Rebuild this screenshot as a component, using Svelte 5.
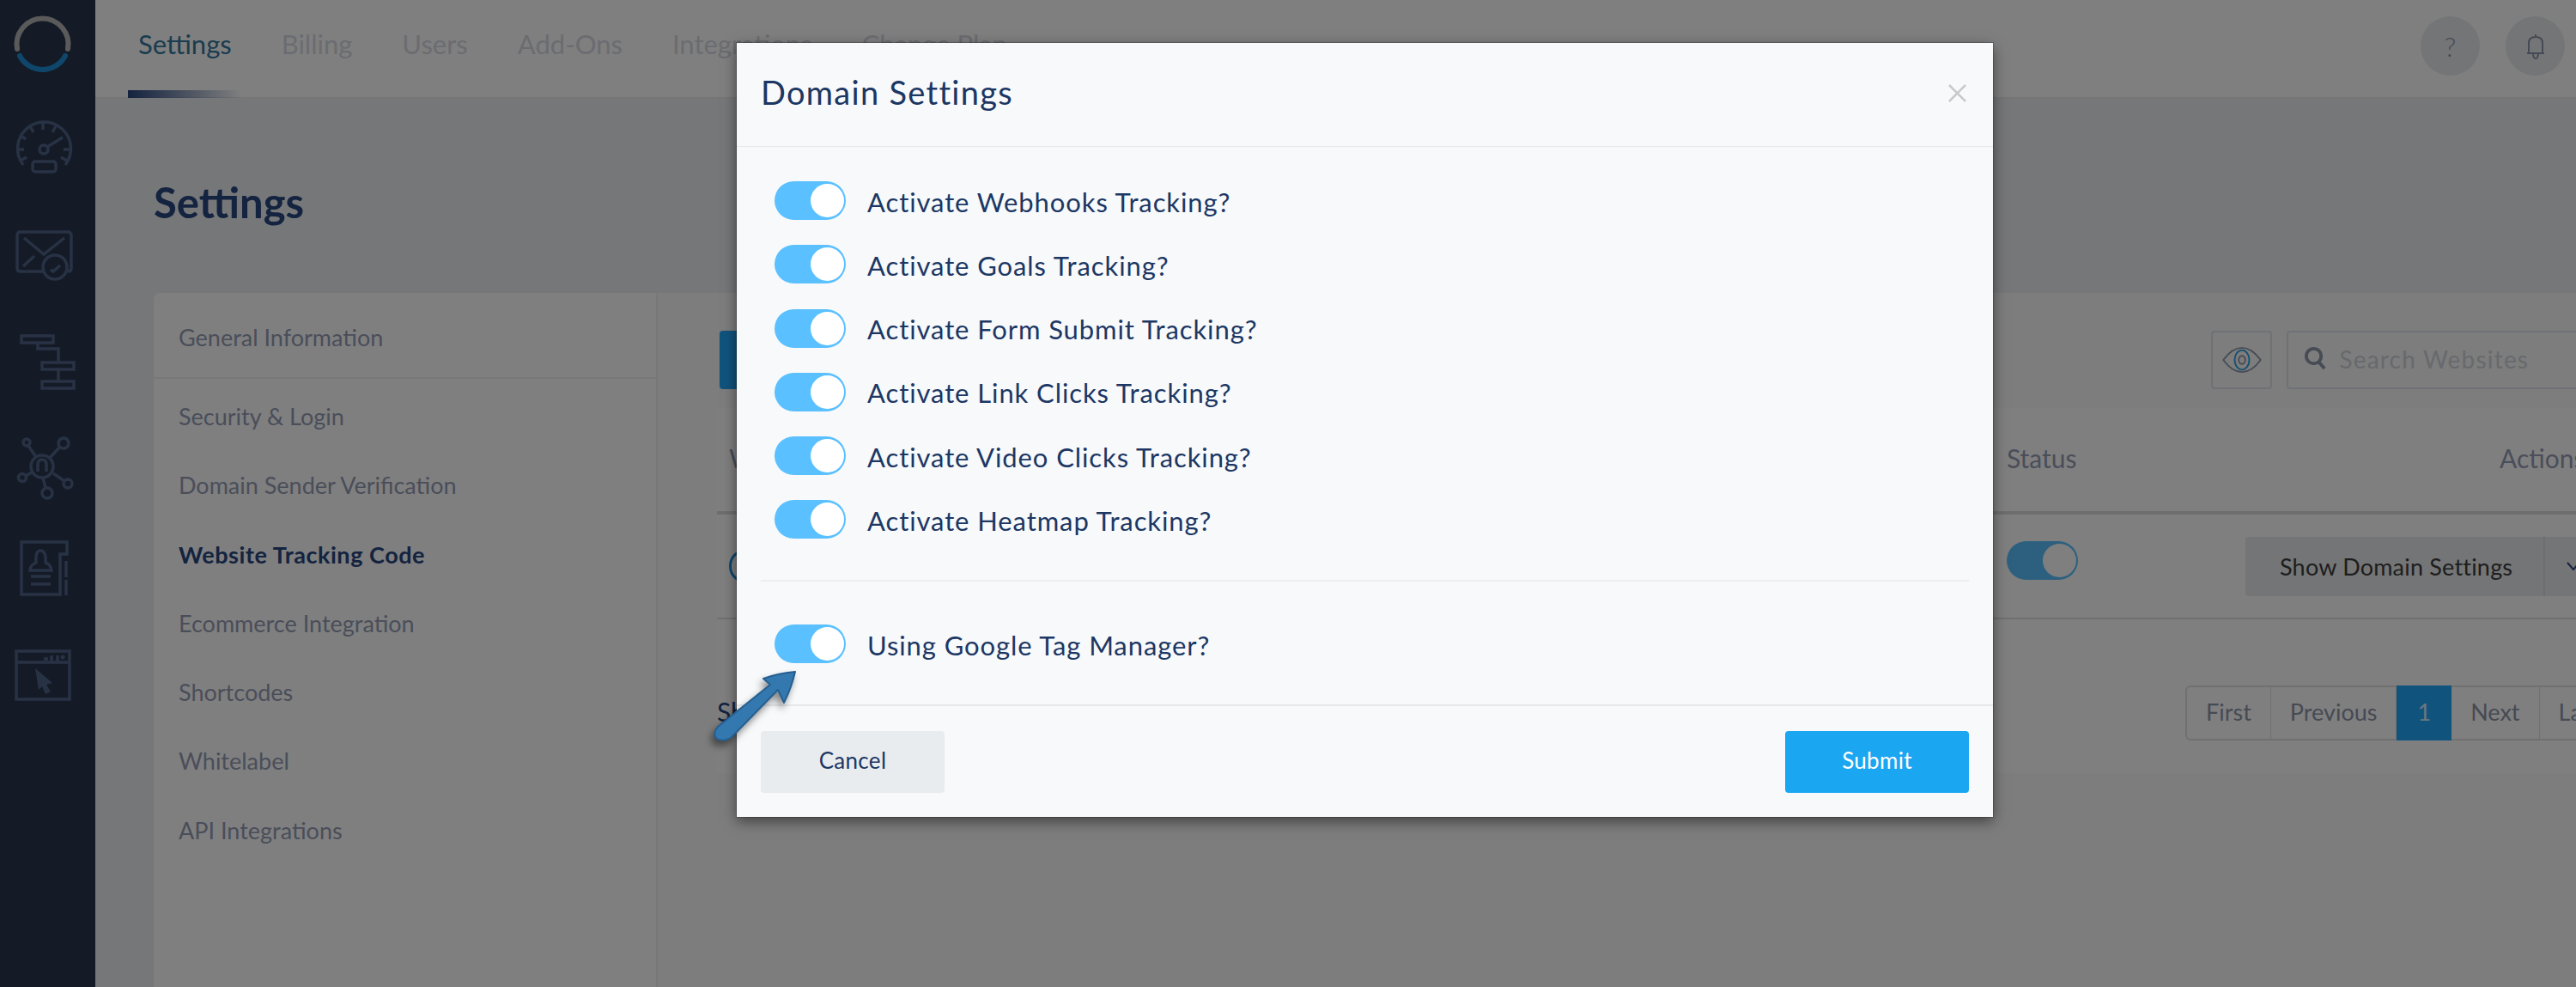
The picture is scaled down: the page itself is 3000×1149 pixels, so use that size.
<script>
	const tabs = ["Settings", "Billing", "Users", "Add-Ons", "Integrations", "Change Plan"];
	const menu = [
		"Security & Login",
		"Domain Sender Verification",
		"Website Tracking Code",
		"Ecommerce Integration",
		"Shortcodes",
		"Whitelabel",
		"API Integrations"
	];
	const tracking = ["Webhooks", "Goals", "Form Submit", "Link Clicks", "Video Clicks", "Heatmap"];
	const pages = ["First", "Previous", "1", "Next", "Last"];
</script>

<div class="page">
	<aside class="sidebar">
		<svg class="logo" viewBox="0 0 111 102" width="111" height="102" fill="none" stroke-linecap="round" stroke-width="6">
			<path d="M20 57 A30 30 0 1 1 79 57" stroke="#b4b4b4" />
			<path d="M23 65 A30 30 0 0 0 76 65" stroke="#1e8fd8" />
		</svg>
		<svg viewBox="0 109 111 123" width="111" height="123" fill="none" stroke="#50648a" stroke-width="3.5">
			<path d="M27 192 A31 31 0 1 1 76 192" />
			<path d="M50 143 V151 M35 147 L39 154 M65 147 L61 154 M24 158 L30 162 M21 174 H28 M74 174 H81 M24 187 L31 183 M78 187 L71 183" />
			<circle cx="51" cy="174" r="5" />
			<path d="M55 171 L73 160" />
			<rect x="38" y="188" width="27" height="12" rx="3" />
		</svg>
		<svg viewBox="0 232 111 123" width="111" height="123" fill="none" stroke="#50648a" stroke-width="3.5">
			<path d="M51 316 H24 Q20 316 20 312 V274 Q20 270 24 270 H79 Q83 270 83 274 V312 Q83 316 79 316" />
			<path d="M28 277 L51 296 L75 277 M27 310 L40 298" />
			<circle cx="64" cy="311" r="14" fill="#28364c" />
			<path d="M59 314 L62 316 L70 309" />
		</svg>
		<svg viewBox="0 355 111 123" width="111" height="123" fill="none" stroke="#50648a" stroke-width="3.5">
			<rect x="25" y="391" width="37" height="8" />
			<path d="M44 399 V406 H68 V422 M68 430 V444" />
			<rect x="49" y="422" width="37" height="8" />
			<rect x="49" y="444" width="37" height="8" />
		</svg>
		<svg viewBox="0 478 111 123" width="111" height="123" fill="none" stroke="#50648a" stroke-width="3.5">
			<circle cx="49" cy="543" r="13" />
			<path d="M44 549 V541 Q44 535 49 535 Q54 535 54 541 V549" />
			<circle cx="31" cy="515" r="4" />
			<circle cx="74" cy="516" r="6" />
			<circle cx="26" cy="556" r="4.5" />
			<circle cx="79" cy="563" r="5" />
			<circle cx="55" cy="574" r="6" />
			<path d="M33 519 L42 532 M70 520 L58 533 M30 554 L37 550 M62 551 L75 560 M50 556 L53 568" />
		</svg>
		<svg viewBox="0 601 111 123" width="111" height="123" fill="none" stroke="#50648a" stroke-width="3.5">
			<path d="M25 631 H78 V645 H70 V692 H25 Z" />
			<path d="M77 653 V672 M77 675 V693" />
			<path d="M42 655 Q41 641 47 641 Q54 641 53 655 Q59 657 60 664 H35 Q35 658 42 655 Z" />
			<path d="M36 671 H59 M36 680 H59" />
		</svg>
		<svg viewBox="0 724 111 123" width="111" height="123" fill="none" stroke="#50648a" stroke-width="3.5">
			<rect x="19" y="758" width="62" height="56" />
			<path d="M19 771 H81" />
			<path d="M51 767 H56 M60 763 V770 M67 763 V770" />
			<circle cx="73" cy="765" r="2.5" fill="#50648a" stroke="none" />
			<path d="M41 778 L61 795 L54 797 L59 805 L53 808 L49 799 L45 803 Z" fill="#50648a" stroke="none" />
		</svg>
	</aside>

	<main class="main">
		<header class="topbar">
			<nav class="tabs">
				{#each tabs as tab, i}
					<span class="tab" class:active={i === 0}>{tab}</span>
				{/each}
			</nav>
			<div class="round-buttons">
				<span class="round help">?</span>
				<span class="round">
					<svg viewBox="0 0 24 30" width="24" height="30" fill="none" stroke="#8d95a8" stroke-width="2">
						<path d="M2 23 H22 M4 23 V11 Q4 4 12 4 Q20 4 20 11 V23 M9 23 Q9 29 12 29 Q15 29 15 23 M12 1 V4" />
					</svg>
				</span>
			</div>
		</header>

		<section class="content">
			<h1>Settings</h1>
			<div class="card">
				<div class="menu">
					<div class="menu-head">General Information</div>
					{#each menu as item}
						<div class="menu-item" class:current={item === "Website Tracking Code"}>{item}</div>
					{/each}
				</div>
				<div class="panel">
					<div class="toolbar">
						<span class="add-button"></span>
						<span class="eye-box">
							<svg viewBox="0 0 50 36" width="48" height="34" fill="none">
								<path d="M2 18 Q13 3 25 3 Q37 3 48 18 Q37 33 25 33 Q13 33 2 18 Z" stroke="#8f97ab" stroke-width="2" />
								<ellipse cx="25" cy="18" rx="9" ry="12" stroke="#2a9fe0" stroke-width="2" />
								<ellipse cx="25" cy="18" rx="4" ry="5" stroke="#8f97ab" stroke-width="2" />
							</svg>
						</span>
						<span class="search">
							<svg viewBox="0 0 28 30" width="27" height="29" fill="none" stroke="#8f97ab">
								<circle cx="12" cy="12" r="9" stroke-width="4" />
								<path d="M18 19 L25 27" stroke-width="4" />
							</svg>
							<span class="placeholder">Search Websites</span>
						</span>
					</div>
					<div class="table">
						<div class="table-head">
							<span class="col-name">Website</span>
							<span class="col-status">Status</span>
							<span class="col-action action-title">Actions</span>
						</div>
						<div class="table-row">
							<span class="col-name"><span class="ring"></span></span>
							<span class="col-status"><span class="toggle"><span class="knob"></span></span></span>
							<span class="col-action split">
								<span class="show-settings">Show Domain Settings</span>
								<svg class="caret" viewBox="0 0 16 10" width="16" height="10" fill="none" stroke="#28467e" stroke-width="2">
									<path d="M1 1 L8 9 L15 1" />
								</svg>
							</span>
						</div>
						<div class="table-foot">
							<span class="showing">Showing 1 to 1 of 1 entries</span>
							<div class="pager">
								{#each pages as page}
									<span class="page-link" class:on={page === "1"}>{page}</span>
								{/each}
							</div>
						</div>
					</div>
				</div>
			</div>
		</section>
	</main>

	<div class="backdrop"></div>

	<div class="modal">
		<div class="modal-head">
			<h2>Domain Settings</h2>
			<svg viewBox="0 0 21 21" width="21" height="21" stroke="#c9c9c9" stroke-width="2.5">
				<path d="M1 1 L20 20 M20 1 L1 20" />
			</svg>
		</div>
		<div class="modal-body">
			{#each tracking as name}
				<div class="option">
					<span class="toggle"><span class="knob"></span></span>
					<span class="label">Activate {name} Tracking?</span>
				</div>
			{/each}
			<hr />
			<div class="option">
				<span class="toggle"><span class="knob"></span></span>
				<span class="label">Using Google Tag Manager?</span>
			</div>
		</div>
		<div class="modal-foot">
			<button class="cancel">Cancel</button>
			<button class="submit">Submit</button>
		</div>
	</div>

	<svg class="arrow" viewBox="825 775 110 100" width="110" height="100">
		<path d="M926 782 Q905 784 889 790 L897 797 L836 846 Q829 855 835 860 Q842 864 851 859 L906 803 L913 818 Q922 800 926 782 Z" fill="#3478b0" stroke="#255f91" stroke-width="2" stroke-linejoin="round" />
	</svg>
</div>

<style>
	:global(body) {
		margin: 0;
	}

	.page {
		position: relative;
		display: flex;
		width: 3000px;
		height: 1149px;
		overflow: hidden;
		background: #eceef0;
		font-family: Lato, "Open Sans", sans-serif;
		color: #28467e;
	}

	.sidebar {
		flex: 0 0 111px;
		display: flex;
		flex-direction: column;
		background: #28364c;
	}

	.logo {
		margin-bottom: 7px;
	}

	.main {
		flex: 1;
		min-width: 0;
	}

	.topbar {
		display: flex;
		justify-content: space-between;
		align-items: flex-start;
		height: 114px;
		box-sizing: border-box;
		padding: 19px 13px 0 38px;
		background: #fff;
		border-bottom: 1px solid #eaeaea;
	}

	.tabs {
		display: flex;
	}

	.tab {
		position: relative;
		height: 95px;
		padding: 0 29px;
		box-sizing: border-box;
		font-size: 31px;
		line-height: 64px;
		color: #d6d8e2;
		white-space: nowrap;
	}

	.tab.active {
		color: #34789f;
		padding: 0 12px;
		margin-right: 17px;
	}

	.tab.active::after {
		content: "";
		position: absolute;
		left: 0;
		right: 0;
		bottom: 0;
		height: 9px;
		background: linear-gradient(90deg, #28467e, #ffffff00);
	}

	.round-buttons {
		display: flex;
		gap: 30px;
	}

	.round {
		display: flex;
		align-items: center;
		justify-content: center;
		width: 69px;
		height: 69px;
		border-radius: 50%;
		background: #e8eaec;
		font-size: 26px;
		color: #8d95a8;
	}

	.help {
		font-size: 32px;
		font-weight: 300;
	}

	.content {
		padding: 0 0 0 68px;
	}

	h1 {
		margin: 0;
		height: 227px;
		box-sizing: border-box;
		padding-top: 92px;
		font-size: 49px;
		line-height: 58px;
		font-weight: 700;
		color: #28467e;
	}

	.card {
		display: flex;
		width: 2900px;
		height: 820px;
		background: #f9fbf8;
		border-radius: 8px 0 0 0;
	}

	.menu {
		flex: 0 0 587px;
		box-sizing: border-box;
		background: #fff;
		border-right: 2px solid #f0f0f0;
		border-radius: 8px 0 0 0;
		font-size: 27px;
		color: #949cb4;
	}

	.menu-head {
		height: 100px;
		box-sizing: border-box;
		padding: 34px 0 0 29px;
		line-height: 36px;
		border-bottom: 2px solid #f0f0f0;
	}

	.menu-item {
		height: 80.3px;
		padding: 26px 0 0 29px;
		box-sizing: border-box;
		line-height: 36px;
	}

	.menu-item.current {
		font-weight: 700;
		letter-spacing: 0.55px;
		color: #28467e;
	}

	.panel {
		flex: 1;
		min-width: 0;
	}

	.toolbar {
		display: flex;
		align-items: flex-start;
		height: 134px;
		padding: 44px 0 0 72px;
		box-sizing: border-box;
	}

	.add-button {
		width: 260px;
		height: 68px;
		background: #20a8fc;
		border-radius: 4px;
		margin-right: 1480px;
	}

	.eye-box {
		display: flex;
		align-items: center;
		justify-content: center;
		width: 72px;
		height: 68px;
		box-sizing: border-box;
		border: 2px solid #dfe2e8;
		border-radius: 4px;
		margin-right: 17px;
	}

	.search {
		display: flex;
		align-items: center;
		gap: 14px;
		width: 420px;
		height: 68px;
		padding: 0 0 3px 18px;
		box-sizing: border-box;
		border: 2px solid #dfe2e8;
		border-radius: 4px;
	}

	.placeholder {
		font-size: 28px;
		letter-spacing: 1.2px;
		color: #d0d3dc;
	}

	.table {
		background: #fff;
		height: 425px;
		margin-left: 69px;
	}

	.table-head,
	.table-row {
		display: flex;
		box-sizing: border-box;
		font-size: 30px;
		color: #949cb4;
	}

	.table-head {
		height: 124px;
		line-height: 116px;
		border-bottom: 4px solid #dcdcdc;
	}

	.table-row {
		height: 122px;
		border-bottom: 2px solid #e0e0e0;
		align-items: center;
	}

	.col-name {
		width: 1502px;
		padding-left: 14px;
		box-sizing: border-box;
	}

	.col-status {
		width: 278px;
		display: flex;
	}

	.col-action {
		width: 400px;
	}

	.action-title {
		padding-left: 296px;
		box-sizing: border-box;
	}

	.col-status .toggle {
		margin-top: -13px;
	}

	.ring {
		display: block;
		width: 30px;
		height: 36px;
		box-sizing: border-box;
		border: 3px solid #1e8fd8;
		border-radius: 50%;
	}

	.split {
		display: flex;
		height: 69px;
		border-radius: 4px;
		background: #e8eaec;
		align-items: center;
		color: #3c3c3c;
		font-size: 27px;
		letter-spacing: 0.2px;
	}

	.show-settings {
		padding: 0 0 0 40px;
		width: 349px;
		box-sizing: border-box;
		border-right: 2px solid #dcdcdc;
		line-height: 69px;
		white-space: nowrap;
	}

	.caret {
		margin-left: 25px;
	}

	.table-foot {
		display: flex;
		justify-content: space-between;
		align-items: flex-start;
		padding-top: 77px;
	}

	.showing {
		font-size: 30px;
		color: #28467e;
		margin-top: 12px;
	}

	.pager {
		display: flex;
		height: 64px;
		margin-right: 55px;
		box-sizing: border-box;
		border: 2px solid #e0e0e0;
		border-radius: 6px;
		font-size: 27px;
		color: #8d95a8;
		width: 479px;
	}

	.page-link {
		padding: 0 22px;
		line-height: 58px;
		border-right: 1px solid #e0e0e0;
	}

	.page-link.on {
		margin: -2px 0;
		padding: 2px 24px;
		background: #20a8fc;
		color: #d8eefc;
		border: 0;
	}

	.backdrop {
		position: absolute;
		inset: 0;
		background: rgba(0, 0, 0, 0.5);
	}

	.modal {
		position: absolute;
		left: 858px;
		top: 50px;
		width: 1463px;
		height: 901px;
		display: flex;
		flex-direction: column;
		background: #f7f9fb;
		color: #1c3763;
		box-shadow: 0 0 0 1px rgba(0, 0, 0, 0.2), 0 5px 15px rgba(0, 0, 0, 0.5);
	}

	.modal-head {
		flex: 0 0 121px;
		display: flex;
		align-items: center;
		justify-content: space-between;
		box-sizing: border-box;
		padding: 0 31px 0 28px;
		border-bottom: 1px solid #e6e8ea;
	}

	h2 {
		margin: 0 0 6px;
		font-size: 38px;
		font-weight: 400;
		letter-spacing: 1.3px;
	}

	.modal-head svg {
		margin-bottom: 4px;
	}

	.modal-body {
		flex: 1;
		padding: 40px 28px 0;
	}

	.option {
		display: flex;
		align-items: center;
		gap: 25px;
		padding-left: 16px;
		height: 45px;
		margin-bottom: 29.3px;
		font-size: 31px;
		letter-spacing: 0.9px;
	}

	.label {
		padding-top: 2px;
	}

	hr {
		height: 2px;
		border: 0;
		margin: 48px 0 50px;
		background: #eceef0;
	}

	.toggle {
		display: block;
		position: relative;
		flex: 0 0 83px;
		width: 83px;
		height: 45px;
		border-radius: 23px;
		background: #5ac0ff;
	}

	.knob {
		position: absolute;
		top: 3px;
		right: 2px;
		width: 39px;
		height: 39px;
		border-radius: 50%;
		background: #fff;
	}

	.modal-foot {
		flex: 0 0 131px;
		display: flex;
		justify-content: space-between;
		align-items: center;
		box-sizing: border-box;
		padding: 0 28px;
		border-top: 2px solid #e6e8ea;
	}

	button {
		width: 214px;
		height: 72px;
		padding: 0 0 3px;
		border: 0;
		border-radius: 4px;
		font-family: inherit;
		font-size: 26px;
		letter-spacing: 0.3px;
	}

	.cancel {
		background: #e9ecef;
		color: #1c3763;
	}

	.submit {
		background: #1ba6f2;
		color: #fff;
	}

	.arrow {
		position: absolute;
		left: 825px;
		top: 775px;
		filter: drop-shadow(-3px 6px 4px rgba(0, 0, 0, 0.45));
	}
</style>
